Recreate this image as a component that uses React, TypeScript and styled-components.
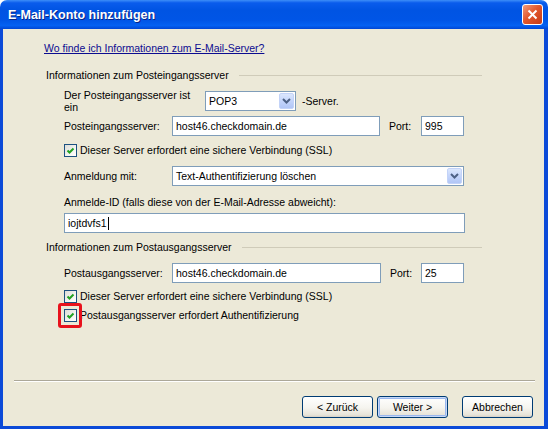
import React from "react";
import styled, { createGlobalStyle, css } from "styled-components";

const GlobalStyle = createGlobalStyle`
  html, body {
    margin: 0;
    padding: 0;
    background: #fff;
  }
  body {
    font-family: "Liberation Sans", Arial, sans-serif;
    font-size: 10.5px;
    color: #000;
  }
`;

const Window = styled.div`
  width: 548px;
  height: 429px;
  display: flex;
  flex-direction: column;
`;

const TitleBar = styled.div`
  height: 29px;
  flex-shrink: 0;
  display: flex;
  align-items: center;
  justify-content: space-between;
  padding: 0 5px 0 8px;
  box-sizing: border-box;
  border-radius: 7px 7px 0 0;
  background: linear-gradient(
    180deg,
    #3d8ef8 0%,
    #0a5cec 10%,
    #0054e3 35%,
    #0055e6 70%,
    #0461f2 88%,
    #0046d4 100%
  );
`;

const Title = styled.span`
  font-family: "Liberation Sans", Arial, sans-serif;
  font-weight: bold;
  font-size: 12.5px;
  color: #fff;
  text-shadow: 1px 1px 0 #0a2584;
`;

const CloseButton = styled.div`
  width: 21px;
  height: 21px;
  box-sizing: border-box;
  border: 1px solid #fff;
  border-radius: 3px;
  display: flex;
  align-items: center;
  justify-content: center;
  background: linear-gradient(135deg, #f39c7c 0%, #e2582e 45%, #c63b16 100%);
`;

const Body = styled.div`
  flex: 1;
  display: flex;
  flex-direction: column;
  background: #ece9d8;
  border-style: solid;
  border-color: #0b4ad8;
  border-width: 0 4px 3px 3px;
`;

const Content = styled.div`
  display: flex;
  flex-direction: column;
  padding: 13px 0 0 41px;
`;

const HelpLink = styled.a`
  height: 13px;
  line-height: 13px;
  color: #0c0c90;
  text-decoration: underline;
  cursor: pointer;
`;

const Form = styled.div`
  width: 436px;
  margin-left: 2px;
  display: flex;
  flex-direction: column;
`;

const GroupHeader = styled.div<{ $mt: number }>`
  margin-top: ${(p) => p.$mt}px;
  height: 13px;
  line-height: 13px;
  display: flex;
  align-items: center;
  gap: 10px;
  white-space: nowrap;

  &::after {
    content: "";
    flex: 1;
    height: 1px;
    background: #cfcbb9;
  }
`;

const Row = styled.div<{ $mt: number; $h: number }>`
  margin-top: ${(p) => p.$mt}px;
  height: ${(p) => p.$h}px;
  padding-left: 18px;
  display: flex;
  align-items: center;
`;

const Label = styled.span<{ $w?: number }>`
  flex-shrink: 0;
  box-sizing: border-box;
  line-height: 12px;
  ${(p) =>
    p.$w !== undefined &&
    css`
      width: ${p.$w}px;
    `}
`;

// two-line label: the padding keeps the last word on its own line
const WrapLabel = styled(Label)`
  padding-right: 8px;
`;

const PortLabel = styled(Label)`
  margin-left: 9px;
`;

const Suffix = styled.span`
  margin-left: 6px;
`;

const Field = styled.div<{ $w: number }>`
  width: ${(p) => p.$w}px;
  height: 20px;
  box-sizing: border-box;
  flex-shrink: 0;
  border: 1px solid #7f9db9;
  background: #fff;
  padding: 0 3px;
  display: flex;
  align-items: center;
  white-space: nowrap;
`;

const Caret = styled.span`
  width: 1px;
  height: 13px;
  margin-left: 1px;
  background: #000;
`;

const Select = styled(Field)`
  justify-content: space-between;
  padding-right: 1px;
`;

const DropButton = styled.span`
  width: 15px;
  height: 16px;
  box-sizing: border-box;
  border: 1px solid #c3d3f8;
  border-radius: 2px;
  background: linear-gradient(180deg, #dce7fd 0%, #c4d5fb 50%, #b1c6f6 100%);
  display: flex;
  align-items: center;
  justify-content: center;
`;

const Check = styled.span<{ $highlight?: boolean }>`
  position: relative;
  width: 13px;
  height: 13px;
  box-sizing: border-box;
  flex-shrink: 0;
  border: 1px solid #1c5180;
  background: linear-gradient(135deg, #dcdcd6 0%, #f4f4f1 60%, #ffffff 100%);
  display: flex;
  align-items: center;
  justify-content: center;

  ${(p) =>
    p.$highlight &&
    css`
      &::after {
        content: "";
        position: absolute;
        top: -7px;
        left: -7px;
        right: -6px;
        bottom: -7px;
        border: 3px solid #e8121c;
        border-radius: 3px;
      }
    `}
`;

const CheckText = styled.span`
  margin-left: 3px;
  white-space: nowrap;
`;

const Footer = styled.div`
  margin: auto 9px 0 11px;
  padding: 15px 2px 8px 0;
  border-top: 1px solid #aca899;
  box-shadow: inset 0 1px 0 #fff;
  display: flex;
  justify-content: flex-end;
`;

const Button = styled.div<{ $focused?: boolean; $ml?: number }>`
  width: 71px;
  height: 22px;
  box-sizing: border-box;
  margin-left: ${(p) => p.$ml ?? 0}px;
  border: 1px solid #003c74;
  border-radius: 3px;
  background: linear-gradient(180deg, #ffffff 0%, #f5f4ee 55%, #e6e3d8 90%, #d6d0c5 100%);
  display: flex;
  align-items: center;
  justify-content: center;
  cursor: default;
  ${(p) =>
    p.$focused &&
    css`
      box-shadow: inset 0 0 0 1px #c6d8f7, inset 0 0 0 2px #9ab7ee;
    `}
`;

const Chevron = () => (
  <svg width="9" height="6" viewBox="0 0 9 6">
    <polyline
      points="1,1 4.5,4.5 8,1"
      fill="none"
      stroke="#4d6185"
      strokeWidth="2"
    />
  </svg>
);

const Tick = () => (
  <svg width="9" height="9" viewBox="0 0 9 9">
    <polyline
      points="1.5,4.5 3.5,6.5 7.5,2.5"
      fill="none"
      stroke="#21a121"
      strokeWidth="2"
    />
  </svg>
);

const CloseX = () => (
  <svg width="11" height="11" viewBox="0 0 11 11">
    <path d="M1.5 1.5 L9.5 9.5 M9.5 1.5 L1.5 9.5" stroke="#fff" strokeWidth="2" />
  </svg>
);

const App = () => {
  return (
    <>
      <GlobalStyle />
      <Window>
        <TitleBar>
          <Title>E-Mail-Konto hinzufügen</Title>
          <CloseButton>
            <CloseX />
          </CloseButton>
        </TitleBar>
        <Body>
          <Content>
            <HelpLink>Wo finde ich Informationen zum E-Mail-Server?</HelpLink>
            <Form>
              <GroupHeader $mt={14}>Informationen zum Posteingangsserver</GroupHeader>
              <Row $mt={7} $h={24}>
                <WrapLabel $w={141}>Der Posteingangsserver ist ein</WrapLabel>
                <Select $w={91}>
                  POP3
                  <DropButton>
                    <Chevron />
                  </DropButton>
                </Select>
                <Suffix>-Server.</Suffix>
              </Row>
              <Row $mt={3} $h={20}>
                <Label $w={108}>Posteingangsserver:</Label>
                <Field $w={208}>host46.checkdomain.de</Field>
                <PortLabel $w={32}>Port:</PortLabel>
                <Field $w={43}>995</Field>
              </Row>
              <Row $mt={7} $h={14}>
                <Check>
                  <Tick />
                </Check>
                <CheckText>Dieser Server erfordert eine sichere Verbindung (SSL)</CheckText>
              </Row>
              <Row $mt={9} $h={20}>
                <Label $w={108}>Anmeldung mit:</Label>
                <Select $w={292}>
                  Text-Authentifizierung löschen
                  <DropButton>
                    <Chevron />
                  </DropButton>
                </Select>
              </Row>
              <Row $mt={9} $h={13}>
                <Label>Anmelde-ID (falls diese von der E-Mail-Adresse abweicht):</Label>
              </Row>
              <Row $mt={5} $h={20}>
                <Field $w={401}>
                  iojtdvfs1
                  <Caret />
                </Field>
              </Row>
              <GroupHeader $mt={8}>Informationen zum Postausgangsserver</GroupHeader>
              <Row $mt={9} $h={20}>
                <Label $w={108}>Postausgangsserver:</Label>
                <Field $w={209}>host46.checkdomain.de</Field>
                <PortLabel $w={31}>Port:</PortLabel>
                <Field $w={43}>25</Field>
              </Row>
              <Row $mt={6} $h={14}>
                <Check>
                  <Tick />
                </Check>
                <CheckText>Dieser Server erfordert eine sichere Verbindung (SSL)</CheckText>
              </Row>
              <Row $mt={5} $h={14}>
                <Check $highlight>
                  <Tick />
                </Check>
                <CheckText>Postausgangsserver erfordert Authentifizierung</CheckText>
              </Row>
            </Form>
          </Content>
          <Footer>
            <Button>&lt; Zurück</Button>
            <Button $focused $ml={4}>
              Weiter &gt;
            </Button>
            <Button $ml={14}>Abbrechen</Button>
          </Footer>
        </Body>
      </Window>
    </>
  );
};

export default App;
